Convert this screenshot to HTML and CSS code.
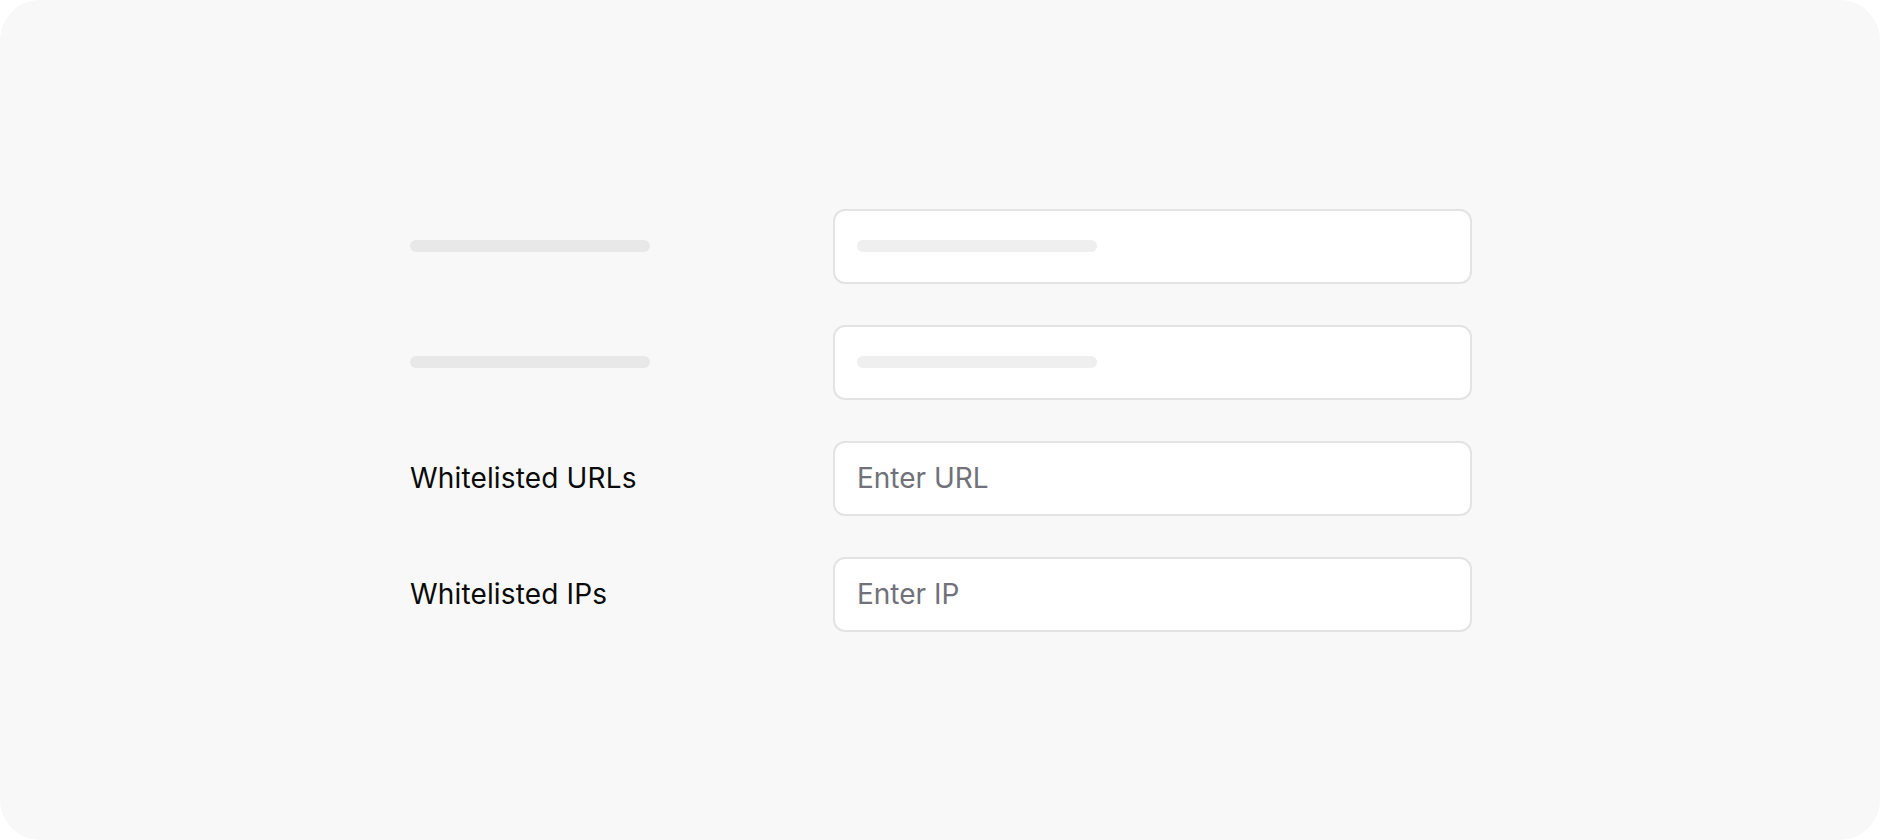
FILE: index.html
```html
<!DOCTYPE html>
<html lang="en">
<head>
<meta charset="utf-8">
<title>Whitelist settings</title>
<link rel="stylesheet" href="styles.css">
</head>
<body>
<div class="panel">
  <div class="form">
    <div class="row">
      <div class="label"><span class="skel skel-label"></span></div>
      <div class="field"><span class="skel skel-input"></span></div>
    </div>
    <div class="row">
      <div class="label"><span class="skel skel-label"></span></div>
      <div class="field"><span class="skel skel-input"></span></div>
    </div>
    <div class="row">
      <div class="label">Whitelisted URLs</div>
      <div class="field"><span class="placeholder">Enter URL</span></div>
    </div>
    <div class="row">
      <div class="label">Whitelisted IPs</div>
      <div class="field"><span class="placeholder">Enter IP</span></div>
    </div>
  </div>
</div>
</body>
</html>
```

FILE: styles.css
```css
html, body {
  margin: 0;
  padding: 0;
  background: #ffffff;
}
body {
  font-family: Inter, "Noto Sans", sans-serif;
  width: 1880px;
  height: 840px;
}
.panel {
  width: 1880px;
  height: 840px;
  background: #f8f8f8;
  border-radius: 40px;
  display: flex;
  align-items: center;
  justify-content: center;
}
.form {
  display: flex;
  flex-direction: column;
  gap: 41px;
  width: 1062px;
  margin-left: 2px;
}
.row {
  display: grid;
  grid-template-columns: 423px 639px;
  align-items: center;
}
.label {
  font-size: 28px;
  font-weight: 400;
  letter-spacing: 0.15px;
  color: #0a0a0a;
  display: flex;
  align-items: center;
}
.field {
  box-sizing: border-box;
  height: 75px;
  background: #ffffff;
  border: 2px solid #e3e3e3;
  border-radius: 12px;
  padding: 0 22px;
  display: flex;
  align-items: center;
}
.skel {
  display: block;
  width: 240px;
  height: 12px;
  border-radius: 6px;
}
.skel-label {
  background: #e8e8e8;
}
.skel-input {
  background: #efefef;
}
.placeholder {
  font-size: 28px;
  color: #71717a;
}
```
